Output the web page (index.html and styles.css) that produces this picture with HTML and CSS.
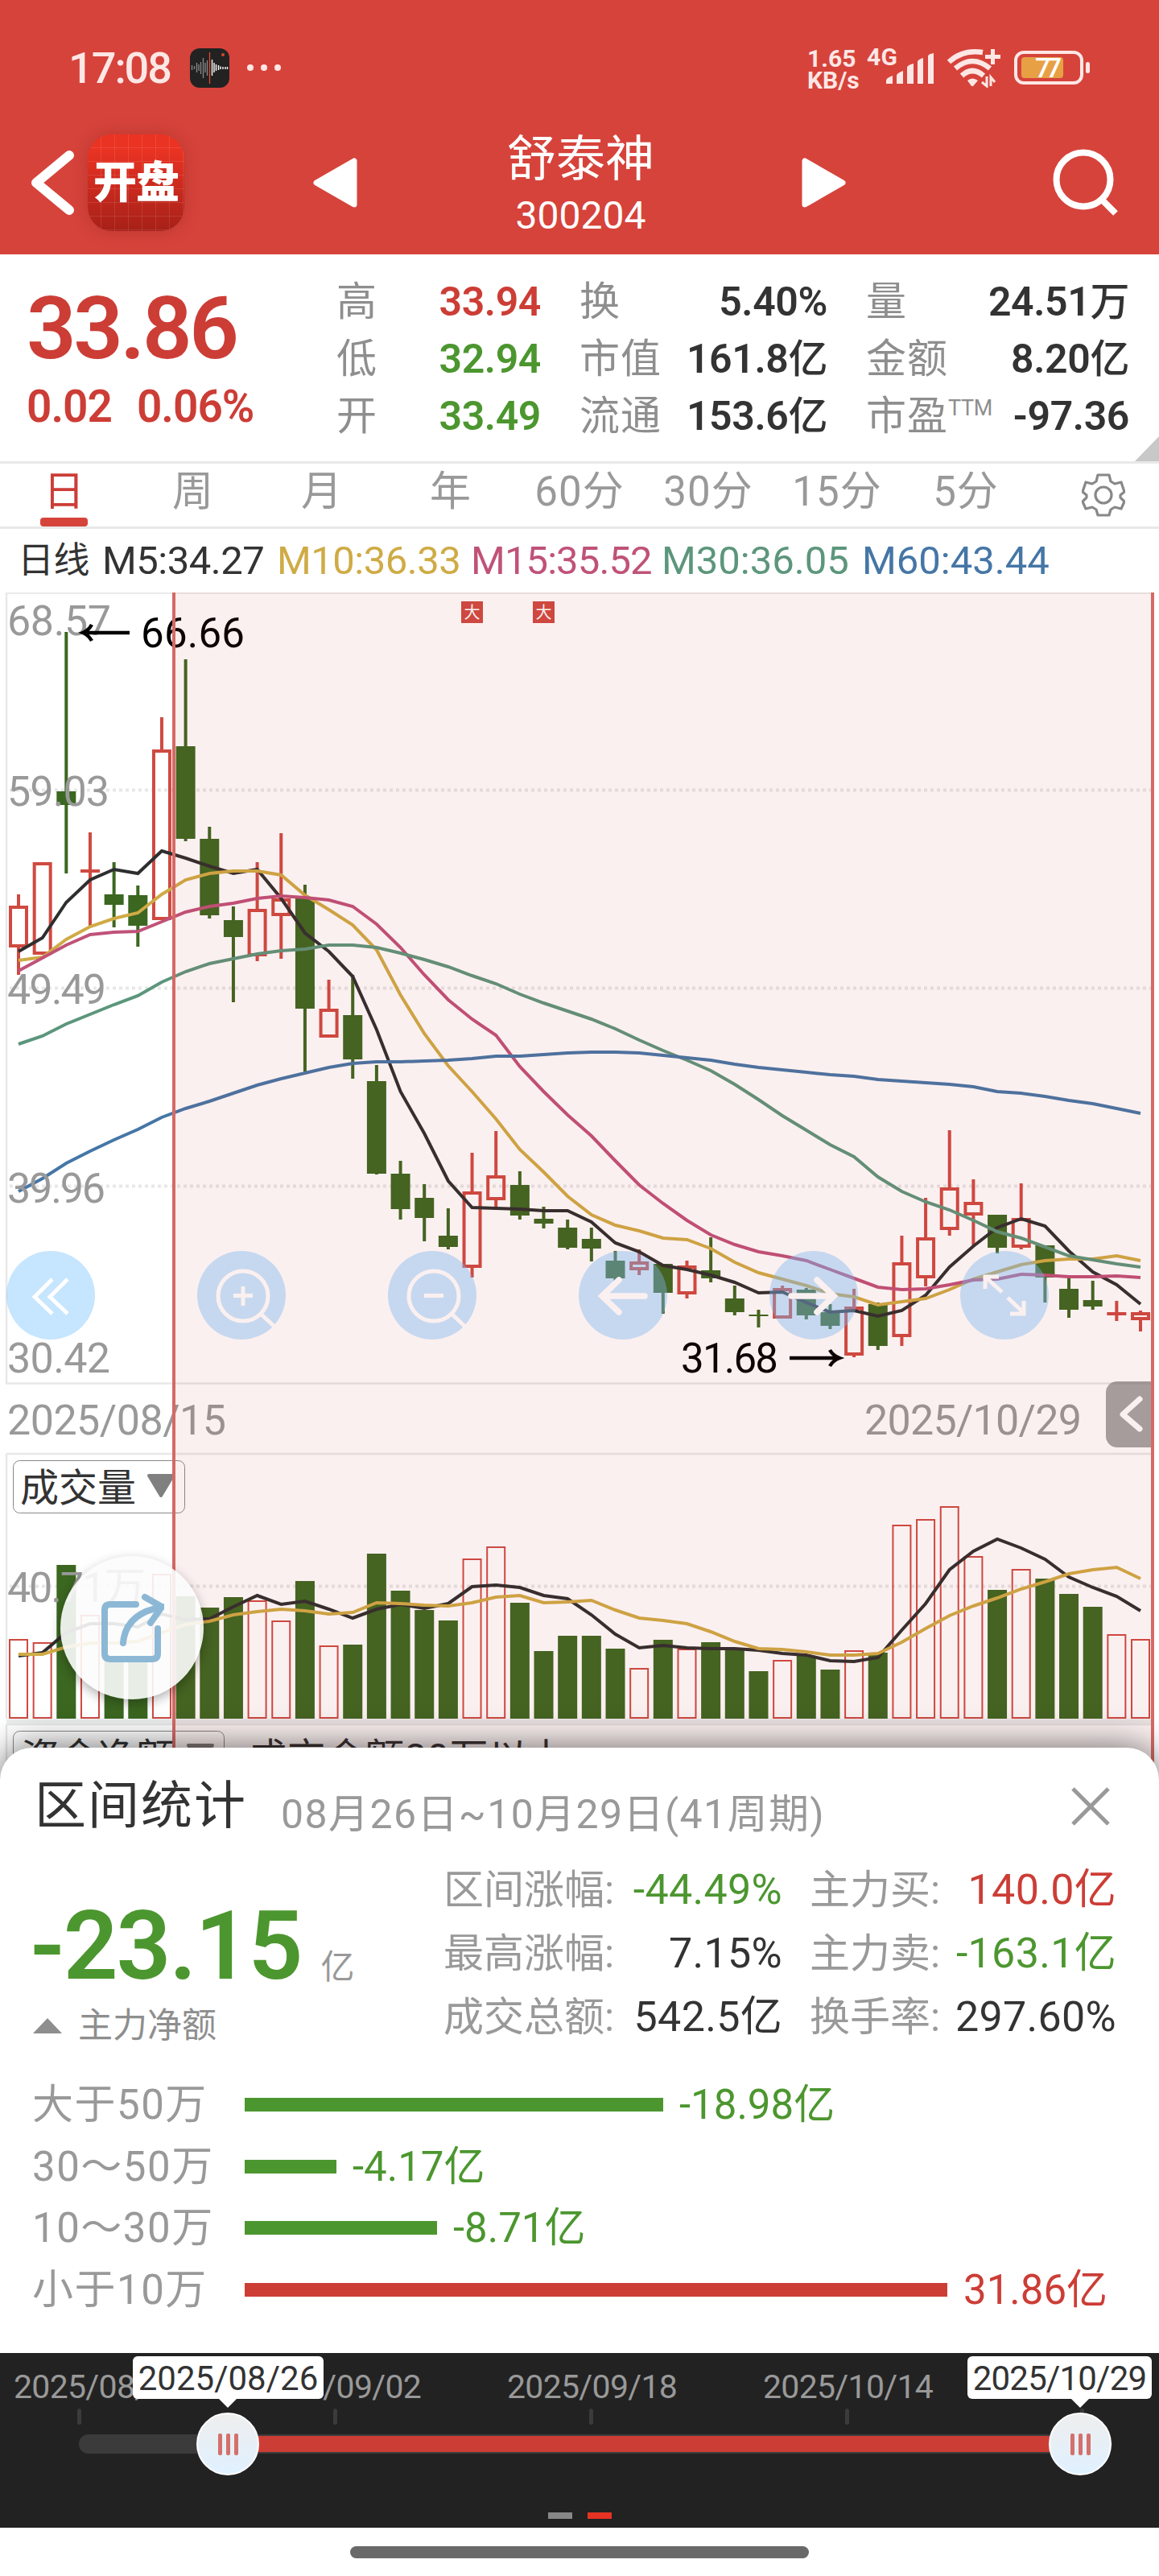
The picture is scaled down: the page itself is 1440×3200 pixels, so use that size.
FILE: index.html
```
<!DOCTYPE html>
<html lang="zh-CN">
<head>
    <meta charset="UTF-8">
    <meta name="viewport" content="width=device-width, initial-scale=1.0">
    <title>舒泰神 300204</title>
    <link rel="stylesheet" href="styles.css">
</head>
<body>
    <header class="header">
        <!-- 状态栏 -->
        <div class="status-bar">
            <span class="clock">17:08</span>
            <svg class="recorder" viewBox="0 0 49 49">
                <rect width="49" height="49" rx="12" fill="#222"/>
                <path d="M2.500 21v6M5.500 22v4M8.500 18v12M11 20v8M13.500 17v15M16.500 12v25M19 18v12M21.500 15v19" stroke="#8a8a8a" stroke-width="1.300"/>
                <path d="M27.500 14v20M30 18v12M32.500 20v8M35.500 21v6M38 22.500v3.500M41 23v3M44 23v3M46.500 23v3" stroke="#fff" stroke-width="1.400"/>
                <path d="M24.500 5v39" stroke="#e04b30" stroke-width="1.300"/>
                <circle cx="41" cy="8" r="2" fill="#d4492f"/>
            </svg>
            <span class="dots"><i></i><i></i><i></i></span>
            <div class="net-speed"><span>1.65</span><span>KB/s</span></div>
            <svg class="signal" viewBox="0 0 85 50">
                <text x="0" y="22" class="signal-text" textLength="38">4G</text>
                <path d="M24 45v-4q0-3 8-6v10zM37 45v-10q0-3 8-6v16zM50 45V25q0-3 8-5v25zM63 45V18q0-3 7-5v32zM76 45V11q0-3 7-4v38z" fill="#fde7e5"/>
            </svg>
            <svg class="wifi" viewBox="0 0 70 50">
                <g fill="none" stroke="#fde7e5" stroke-width="6.500">
                    <path d="M3 18Q20 2 45 6"/>
                    <path d="M11 26Q32 8 54 26"/>
                    <path d="M19 35Q32 23 46 35"/>
                </g>
                <path d="M26 41q6-5 13 0l-6 7h-2zM55 2h5v7h7v5h-7v7h-5v-7h-7V9h7z" fill="#fde7e5"/>
                <path d="M50 36v12l-6-5M55 48V37l5 6" fill="none" stroke="#fde7e5" stroke-width="3"/>
            </svg>
            <svg class="battery" viewBox="0 0 96 42">
                <rect x="2" y="2" width="82" height="38" rx="10" fill="none" stroke="#fde7e5" stroke-width="4"/>
                <rect x="9" y="8" width="52" height="26" rx="4" fill="#e8a045"/>
                <rect x="89" y="14" width="5" height="14" rx="2.500" fill="#fde7e5"/>
                <text x="26" y="33" class="battery-text" textLength="33">77</text>
            </svg>
        </div>

        <!-- 标题栏 -->
        <div class="title-bar">
            <svg class="back" viewBox="0 0 54 80"><path d="M47 6 6 40l41 34" fill="none" stroke="#fff" stroke-width="12" stroke-linecap="round" stroke-linejoin="round"/></svg>
            <div class="app-logo">开盘</div>
            <svg class="prev" viewBox="0 0 56 62"><path d="M51 4v54L4 31z" fill="#fff" stroke="#fff" stroke-width="7" stroke-linejoin="round"/></svg>
            <div class="stock">
                <h1>舒泰神</h1>
                <p>300204</p>
            </div>
            <svg class="next" viewBox="0 0 56 62"><path d="M5 4v54l47-27z" fill="#fff" stroke="#fff" stroke-width="7" stroke-linejoin="round"/></svg>
            <svg class="search" viewBox="0 0 84 84"><circle cx="38" cy="38" r="33.500" fill="none" stroke="#fff" stroke-width="8"/><path d="m61 63 17 17" stroke="#fff" stroke-width="8"/></svg>
        </div>
    </header>

    <!-- 行情 -->
    <section class="quote">
        <div class="price red">
            <strong>33.86</strong>
            <div class="change"><span>0.02</span><span>0.06%</span></div>
        </div>
        <dl class="quote-grid">
            <dt>高</dt><dd class="red">33.94</dd><dt>换</dt><dd>5.40%</dd><dt>量</dt><dd>24.51<small>万</small></dd>
            <dt>低</dt><dd class="green">32.94</dd><dt>市值</dt><dd>161.8<small>亿</small></dd><dt>金额</dt><dd>8.20<small>亿</small></dd>
            <dt>开</dt><dd class="green">33.49</dd><dt>流通</dt><dd>153.6<small>亿</small></dd><dt>市盈<sup>TTM</sup></dt><dd>-97.36</dd>
        </dl>
    </section>

    <nav class="tabs">
        <a class="active">日</a><a>周</a><a>月</a><a>年</a><a>60分</a><a>30分</a><a>15分</a><a>5分</a>
        <svg class="gear" viewBox="0 0 54 54">
            <path d="M20 2h14l2 8 5 3 8-2 4 12-5 4 0 3 5 5-4 9-8-2-5 3-2 7H20l-2-7-5-3-8 2-4-9 5-5 0-3-5-4 4-12 8 2 5-3z" fill="none" stroke="#888" stroke-width="3.200" stroke-linejoin="round"/>
            <circle cx="27" cy="27" r="10" fill="none" stroke="#888" stroke-width="3.200"/>
        </svg>
    </nav>

    <div class="averages">
        <span>日线</span>
        <span>M5:34.27</span>
        <span class="m10">M10:36.33</span>
        <span class="m15">M15:35.52</span>
        <span class="m30">M30:36.05</span>
        <span class="m60">M60:43.44</span>
    </div>

    <!-- K线和成交量 -->
    <section class="chart">
        <svg class="plot" id="plot" viewBox="0 736 1440 1475">
            <g class="frame">
                <path d="M8 736.500H1432M8 736V1718.500H1432M8 1806H1432M8 1806V2135M8 2142H1432M8 2142V2211"/>
                <path d="M8 2138.500H1432" class="divider"/>
            </g>
            <path class="grid" d="M12 981.500H1430M12 1227.500H1430M12 1473.500H1430M12 1970.500H1430"/>
            <g id="candles"></g>
            <g id="volumes"></g>
            <g id="lines"></g>
            <g class="axis">
                <text x="9" y="789" textLength="129">68.57</text>
                <text x="9" y="1001" textLength="127">59.03</text>
                <text x="9" y="1247" textLength="123">49.49</text>
                <text x="9" y="1494" textLength="122">39.96</text>
                <text x="9" y="1705" textLength="128">30.42</text>
                <text x="9" y="1782" textLength="272">2025/08/15</text>
                <text x="1074" y="1782" textLength="270">2025/10/29</text>
                <text x="9" y="1990" textLength="172">40.71万</text>
            </g>
            <g class="extreme">
                <path d="M161 786h-58M114 776q-4 7-11 10 7 3 11 10"/>
                <text x="175" y="804" textLength="129">66.66</text>
                <text x="846" y="1705" textLength="121">31.68</text>
                <path d="M981 1687h62M1031 1677q4 7 12 10-8 3-12 10"/>
            </g>
            <g class="mark">
                <rect x="573" y="747" width="27" height="27"/><text x="576.500" y="768">大</text>
                <rect x="662" y="747" width="27" height="27"/><text x="665.500" y="768">大</text>
            </g>
            <g class="picker">
                <rect x="16.500" y="1814.500" width="213" height="65" rx="8"/>
                <text x="25" y="1865" textLength="144">成交量</text>
                <path d="M185 1833h30l-15 25z"/>
                <rect x="16.500" y="2150.500" width="262" height="65" rx="8"/>
                <text x="26" y="2200" textLength="192">资金净额</text>
                <path d="M234 2168h30l-15 25z"/>
                <text x="308" y="2200" textLength="396">成交金额30万以上</text>
            </g>
        </svg>

        <div class="toolbar">
            <button><svg viewBox="0 0 110 110"><path d="m57 35-22 22 22 21M76 35 54 57l22 21"/></svg></button>
            <button><svg viewBox="0 0 110 110"><circle cx="57" cy="56" r="31"/><path d="m80 79 16 15M45 55.500h24M57 44v24"/></svg></button>
            <button><svg viewBox="0 0 110 110"><circle cx="57" cy="56" r="31"/><path d="m80 79 16 15M45 55.500h24"/></svg></button>
            <button><svg viewBox="0 0 110 110" class="bold"><path d="M82 56H30M50 36 29 56l21 20"/></svg></button>
            <button><svg viewBox="0 0 110 110" class="bold"><path d="M27 56h52M59 36l21 20-21 20"/></svg></button>
            <button><svg viewBox="0 0 110 110"><path d="M31 47V32h17M32 33l20 18M59 58l20 19M79 62v16H62"/></svg></button>
        </div>

        <div class="drawer"><svg viewBox="0 0 58 82"><path d="M42 22 21 41l21 18" fill="none" stroke="#fff" stroke-width="7" stroke-linecap="round" stroke-linejoin="round"/></svg></div>
        <div class="selection"></div>
        <div class="share">
            <svg viewBox="0 0 80 86"><path d="M45 14H13q-7 0-7 7v54q0 7 7 7h52q7 0 7-7V44M29 62Q32 25 78 17M56 5l21 12-14 20" fill="none" stroke="#8cb8d6" stroke-width="8" stroke-linecap="round" stroke-linejoin="round"/></svg>
        </div>
    </section>

    <!-- 区间统计 -->
    <section class="sheet">
        <div class="sheet-head">
            <h2>区间统计</h2>
            <span class="range">08月26日~10月29日(41周期)</span>
            <svg class="close" viewBox="0 0 48 48"><path d="m2 2 44 44M46 2 2 46" stroke="#999" stroke-width="5"/></svg>
        </div>

        <div class="summary">
            <div class="net">
                <div class="net-value"><strong>-23.15</strong><span>亿</span></div>
                <div class="net-label">主力净额</div>
            </div>
            <dl class="stats">
                <dt>区间涨幅:</dt><dd class="green">-44.49%</dd><dt>主力买:</dt><dd class="red">140.0亿</dd>
                <dt>最高涨幅:</dt><dd>7.15%</dd><dt>主力卖:</dt><dd class="green">-163.1亿</dd>
                <dt>成交总额:</dt><dd>542.5亿</dd><dt>换手率:</dt><dd>297.60%</dd>
            </dl>
        </div>

        <div class="flows">
            <div class="flow green"><label>大于50万</label><i style="width: 520px"></i><span>-18.98亿</span></div>
            <div class="flow green"><label>30～50万</label><i style="width: 114px"></i><span>-4.17亿</span></div>
            <div class="flow green"><label>10～30万</label><i style="width: 239px"></i><span>-8.71亿</span></div>
            <div class="flow red"><label>小于10万</label><i style="width: 873px"></i><span>31.86亿</span></div>
        </div>
    </section>

    <!-- 时间轴 -->
    <section class="timeline">
        <div class="dates">
            <span>2025/08/15</span><span>2025/09/02</span><span>2025/09/18</span><span>2025/10/14</span>
        </div>
        <div class="ticks"><i></i><i></i><i></i><i></i><i></i></div>
        <div class="track"><div class="track-fill"></div></div>
        <div class="thumb thumb-start"><i></i><i></i><i></i></div>
        <div class="thumb thumb-end"><i></i><i></i><i></i></div>
        <div class="tip tip-start">2025/08/26</div>
        <div class="tip tip-end">2025/10/29</div>
        <div class="pager"><i></i><i class="on"></i></div>
    </section>

    <footer class="home"><div class="home-bar"></div></footer>

    <script>
        const STEP = 29.66, START = 23;
        const px = i => START + STEP * i;

        // [涨1跌0, 最高, 实体上沿, 实体下沿, 最低]
        const candles = [
            [1,1111,1125,1177,1211],[1,1071,1071,1186,1186],[0,785,983,1000,1085],[1,1034,1080,1084,1151],
            [0,1071,1111,1124,1152],[0,1100,1112,1150,1176],[1,891,931,1143,1143],[0,819,927,1042,1045],
            [0,1027,1042,1137,1141],[0,1126,1143,1164,1245],[1,1071,1129,1188,1194],[1,1035,1116,1138,1191],
            [0,1099,1116,1253,1331],[1,1217,1253,1289,1289],[0,1211,1261,1316,1340],[0,1323,1343,1458,1459],
            [0,1442,1458,1502,1515],[0,1471,1488,1513,1542],[0,1501,1535,1549,1552],[1,1432,1480,1575,1587],
            [1,1405,1460,1491,1503],[0,1455,1472,1510,1515],[0,1499,1514,1520,1526],[0,1515,1525,1550,1552],
            [0,1525,1539,1551,1567],[0,1554,1566,1588,1591],[1,1552,1567,1578,1584],[0,1570,1570,1606,1632],
            [1,1566,1572,1608,1613],[0,1537,1578,1588,1593],[0,1597,1613,1630,1634],[0,1627,1633,1635,1649],
            [1,1597,1600,1638,1638],[0,1600,1602,1634,1639],[0,1620,1630,1647,1651],[1,1601,1623,1684,1686],
            [0,1618,1620,1672,1677],[1,1535,1568,1661,1672],[1,1488,1537,1588,1598],[1,1404,1475,1528,1535],
            [1,1465,1493,1510,1547],[0,1509,1509,1550,1557],[1,1470,1513,1550,1552],[0,1547,1547,1587,1618],
            [0,1584,1601,1627,1637],[0,1591,1615,1623,1627],[1,1616,1630,1634,1641],[1,1628,1630,1640,1654]
        ];

        const volumes = [
            2036,2040,1944,2006,2059,2058,1955,1983,1997,1984,1988,2013,1964,2044,2043,1930,1976,2000,2013,1936,1921,1991,2051,2032,
            2032,2048,2072,2037,2048,2040,2049,2076,2062,2057,2074,2050,2053,1894,1887,1871,1933,1975,1949,1961,1980,1996,2030,2036
        ];

        const lines = {
            m5: [1182,1165,1121,1093,1080,1085,1057,1066,1076,1085,1080,1116,1159,1182,1213,1279,1356,1408,1467,1500,1501,1502,1504,1504,
                1518,1544,1555,1572,1577,1584,1593,1606,1605,1618,1630,1628,1635,1628,1609,1574,1548,1525,1514,1523,1554,1580,1596,1620],
            m10: [1193,1189,1167,1151,1141,1134,1111,1093,1085,1082,1082,1087,1112,1130,1149,1180,1236,1284,1324,1356,1390,1428,1456,1486,
                1509,1522,1529,1538,1540,1551,1568,1581,1589,1597,1607,1611,1621,1617,1613,1602,1589,1580,1571,1566,1564,1564,1560,1566],
            m15: [1206,1190,1174,1161,1158,1157,1145,1133,1126,1122,1116,1113,1115,1118,1126,1148,1177,1211,1242,1266,1286,1325,1356,1385,
                1411,1442,1472,1495,1516,1534,1546,1555,1560,1566,1577,1588,1599,1602,1601,1596,1590,1589,1583,1584,1586,1586,1585,1587],
            m30: [1297,1287,1272,1260,1248,1237,1220,1207,1197,1191,1185,1181,1179,1174,1174,1177,1184,1192,1201,1212,1222,1235,1246,1256,
                1266,1278,1292,1305,1317,1330,1347,1366,1386,1404,1422,1437,1462,1480,1493,1503,1516,1530,1538,1549,1560,1565,1570,1574],
            m60: [1480,1464,1445,1430,1416,1403,1388,1377,1368,1358,1348,1340,1333,1326,1321,1319,1319,1318,1317,1315,1312,1312,1310,1308,
                1307,1307,1308,1311,1314,1317,1322,1326,1329,1332,1335,1337,1341,1343,1345,1347,1350,1356,1358,1362,1367,1371,1377,1383],
            'v5 m5': [2057,2053,2028,2017,2017,2021,2005,2012,2011,1996,1982,1993,1989,1999,2010,1999,1993,1998,1992,1971,1969,1972,1982,1986,
                2006,2030,2047,2044,2047,2048,2048,2050,2054,2056,2063,2064,2059,2025,1992,1950,1927,1912,1923,1937,1959,1972,1983,2001],
            'v10 m10': [2055,2055,2046,2041,2041,2039,2028,2018,2014,2006,2002,1999,2001,2005,2003,1991,1992,1994,1995,1991,1984,1982,1991,1990,
                1988,2000,2010,2013,2017,2027,2039,2048,2049,2052,2056,2056,2054,2040,2023,2007,1995,1985,1974,1965,1955,1950,1947,1961]
        };

        let bodies = '', bars = '', paths = '';
        candles.forEach(([up, high, top, bottom, low], i) => {
            const x = px(i), h = bottom - top;
            const cls = up ? 'up' : 'down';
            bodies += `<path class="${cls} wick" d="M${x} ${high}V${top}M${x} ${bottom}V${low}"/>`;
            if (up && h > 4) {
                bodies += `<rect class="up" x="${x - 10}" y="${top + 2}" width="20" height="${h - 4}"/>`;
            } else {
                bodies += `<rect class="${cls} solid" x="${x - 12}" y="${top}" width="24" height="${h}"/>`;
            }
            const v = volumes[i];
            bars += up
                ? `<rect class="up thin" x="${x - 11}" y="${v + 1}" width="22" height="${2134 - v - 1}"/>`
                : `<rect class="down solid" x="${x - 12}" y="${v}" width="24" height="${2135 - v}"/>`;
        });
        for (const name in lines) {
            const points = lines[name].map((y, i) => `${px(i).toFixed(1)},${y}`).join(' ');
            paths += `<polyline class="${name}" points="${points}"/>`;
        }
        document.getElementById('candles').innerHTML = bodies;
        document.getElementById('volumes').innerHTML = bars;
        document.getElementById('lines').innerHTML = paths;
    </script>
</body>
</html>
```
FILE: styles.css
```
:root {
    --red: #cc3d36;
    --green: #4c962f;
    --brand: #d6433b;
    --text: #333;
    --muted: #999;
}

* {
    box-sizing: border-box;
    margin: 0;
    padding: 0;
}

body {
    width: 1440px;
    height: 3200px;
    overflow: hidden;
    background: #fff;
    color: var(--text);
    font-family: Roboto, "Noto Sans CJK SC", sans-serif;
    font-size: 50px;
    line-height: 1;
}

svg {
    display: block;
    flex: none;
}

.red { color: var(--red); }
.green { color: var(--green); }
.m10 { color: #cfab45; }
.m15 { color: #c05279; }
.m30 { color: #5c967c; }
.m60 { color: #4576a6; }

/* header */
.header {
    height: 316px;
    background: var(--brand);
    color: #fff;
}

.status-bar {
    display: flex;
    align-items: center;
    height: 168px;
    padding-left: 85px;
}

.clock {
    width: 151px;
    padding-top: 2px;
    font-size: 54px;
    font-weight: 500;
    letter-spacing: -2px;
    color: #fde7e5;
}

.recorder {
    width: 49px;
    height: 49px;
}

.dots {
    display: flex;
    gap: 9px;
    width: 698px;
    padding-left: 22px;
}

.dots i {
    width: 8px;
    height: 8px;
    border-radius: 50%;
    background: #fde7e5;
}

.net-speed {
    display: flex;
    flex-direction: column;
    width: 94px;
    padding: 3px 0 0 20px;
    font-size: 30px;
    font-weight: 700;
    line-height: 27px;
    color: #fde7e5;
}

.signal {
    width: 85px;
    height: 50px;
    overflow: visible;
}

.signal-text {
    font-size: 30px;
    font-weight: 700;
    fill: #fde7e5;
}

.wifi {
    width: 70px;
    height: 50px;
    margin-left: 14px;
}

.battery {
    width: 96px;
    height: 42px;
    margin-left: 14px;
}

.battery-text {
    font-size: 34px;
    font-weight: 500;
    fill: #fff;
}

.title-bar {
    display: flex;
    align-items: center;
    height: 118px;
    padding-left: 39px;
}

.back {
    width: 54px;
    height: 80px;
}

.app-logo {
    flex: none;
    width: 120px;
    height: 120px;
    margin-left: 16px;
    border-radius: 30px;
    background:
        repeating-linear-gradient(90deg, transparent 0 16px, rgba(255,255,255,0.1) 16px 17px),
        repeating-linear-gradient(transparent 0 16px, rgba(255,255,255,0.1) 16px 17px),
        linear-gradient(#ea3323 15%, #a62018);
    box-shadow: 0 0 20px rgba(120,30,20,0.3);
    font-size: 54px;
    font-weight: 900;
    letter-spacing: -1px;
    line-height: 122px;
    text-align: center;
}

.prev {
    width: 56px;
    height: 62px;
    margin-left: 160px;
}

.stock {
    width: 550px;
    padding-left: 3px;
    text-align: center;
}

.stock h1 {
    height: 66px;
    font-size: 61px;
    font-weight: 400;
    line-height: 62px;
}

.stock p {
    margin-top: 15px;
    font-size: 48px;
    line-height: 40px;
}

.next {
    width: 56px;
    height: 62px;
}

.search {
    width: 84px;
    height: 84px;
    margin-left: 257px;
}

/* quote */
.quote {
    position: relative;
    display: flex;
    height: 260px;
    border-bottom: 3px solid #e9e9e9;
}

.quote::after {
    content: "";
    position: absolute;
    right: 0;
    bottom: 0;
    border: solid transparent;
    border-width: 0 0 31px 30px;
    border-bottom-color: #c8c8c8;
}

.price {
    width: 418px;
    padding: 38px 0 0 33px;
    font-weight: 600;
}

.price strong {
    display: block;
    font-size: 108px;
    font-weight: 600;
    letter-spacing: -3.4px;
    line-height: 108px;
}

.change {
    display: flex;
    gap: 31px;
    padding-top: 16px;
    font-size: 55px;
    letter-spacing: -1px;
    line-height: 54px;
}

.quote-grid {
    display: grid;
    grid-template-columns: 119px 135px 198px 158px 198px 177px;
    grid-auto-rows: 71px;
    align-items: center;
    padding-top: 23px;
}

.quote-grid dt {
    color: #8e8e8e;
    letter-spacing: 1px;
    white-space: nowrap;
}

.quote-grid dt:nth-of-type(3n+2),
.quote-grid dt:nth-of-type(3n) {
    padding-left: 48px;
}

.quote-grid dd {
    justify-self: end;
    font-weight: 600;
    letter-spacing: -0.4px;
    white-space: nowrap;
}

.quote-grid small {
    font-size: 49px;
    font-weight: 500;
}

.quote-grid sup {
    font-size: 27px;
    letter-spacing: -0.4px;
    vertical-align: 18px;
    line-height: 0;
}

/* tabs */
.tabs {
    display: flex;
    align-items: center;
    height: 81px;
    border-bottom: 3px solid #e9e9e9;
    color: var(--muted);
}

.tabs a {
    position: relative;
    width: 160px;
    padding-bottom: 8px;
    text-align: center;
    font-size: 51px;
    line-height: 70px;
    letter-spacing: 1px;
}

.tabs .active {
    color: var(--red);
}

.tabs .active::after {
    content: "";
    position: absolute;
    left: 50px;
    bottom: 0;
    width: 59px;
    height: 11px;
    border-radius: 4px;
    background: var(--brand);
}

.gear {
    width: 54px;
    height: 54px;
    margin-left: 64px;
}

.averages {
    display: grid;
    grid-template-columns: 105px 217px 241px 237px 249px 1fr;
    align-items: center;
    height: 79px;
    padding-left: 22px;
    font-size: 49px;
    letter-spacing: -0.5px;
    white-space: nowrap;
}

.averages .m15 {
    letter-spacing: -0.9px;
}

.averages .m30,
.averages .m60 {
    letter-spacing: 0;
}

.averages span:first-child {
    font-size: 45px;
}

/* chart */
.chart {
    position: relative;
    height: 1475px;
}

.plot {
    width: 1440px;
    height: 1475px;
}

.frame path {
    fill: none;
    stroke: #e8e8e8;
    stroke-width: 2.5;
}

.frame .divider {
    stroke: #eceeee;
    stroke-width: 6;
}

.grid {
    stroke: #e8e8e8;
    stroke-width: 4;
    stroke-dasharray: 4 4;
}

.up {
    fill: none;
    stroke: #cf4a41;
    stroke-width: 4;
}

.up.thin { stroke-width: 2; }
.up.solid { fill: #cf4a41; stroke: none; }

.down {
    fill: #3b6720;
    stroke: #3b6720;
    stroke-width: 4;
}

.down.solid { stroke: none; }

polyline {
    fill: none;
    stroke: #2e2e2e;
    stroke-width: 4;
}

polyline.m10 { stroke: #cfab45; }
polyline.m15 { stroke: #c05279; }
polyline.m30 { stroke: #5c967c; }
polyline.m60 { stroke: #4576a6; }

.axis text {
    font-size: 52px;
    fill: var(--muted);
}

.extreme text {
    font-size: 51px;
    fill: #000;
}

.extreme path {
    fill: none;
    stroke: #000;
    stroke-width: 4.5;
}

.mark rect { fill: #cf4a41; }
.mark text { font-size: 20px; fill: #fff; }

.picker rect { fill: none; stroke: #888; }
.picker text { font-size: 48px; fill: var(--text); }
.picker path { fill: #808080; stroke: #808080; stroke-width: 4; stroke-linejoin: round; }

.selection {
    position: absolute;
    left: 214px;
    top: 0;
    width: 1220px;
    height: 100%;
    border: solid #d56a66;
    border-width: 0 4px;
    background: rgba(206,60,50,0.075);
}

.toolbar {
    position: absolute;
    left: 8px;
    top: 818px;
    display: flex;
    gap: 127px;
}

.toolbar button {
    width: 110px;
    height: 110px;
    border: 0;
    border-radius: 50%;
    background: rgba(118,193,253,0.42);
}

.toolbar svg {
    fill: none;
    stroke: #fff;
    stroke-width: 5;
}

.toolbar .bold {
    stroke-width: 7.5;
    stroke-linecap: round;
}

.drawer {
    position: absolute;
    left: 1374px;
    top: 980px;
    width: 58px;
    height: 82px;
    border-radius: 14px 0 0 14px;
    background: rgba(110,110,110,0.62);
}

.share {
    position: absolute;
    left: 75px;
    top: 1197px;
    display: flex;
    align-items: center;
    justify-content: center;
    width: 178px;
    height: 178px;
    border-radius: 50%;
    background: rgba(252,252,252,0.9);
    box-shadow: 0 5px 14px rgba(0,0,0,0.3);
}

.share svg {
    width: 80px;
    height: 86px;
}

/* sheet */
.sheet {
    position: relative;
    height: 752px;
    margin-top: -40px;
    padding: 0 43px;
    border-radius: 40px 40px 0 0;
    background: #fff;
    box-shadow: 0 0 46px rgba(0,0,0,0.6);
}

.sheet-head {
    display: flex;
    align-items: center;
    height: 146px;
}

.sheet-head h2 {
    width: 306px;
    font-size: 64px;
    font-weight: 400;
    letter-spacing: 2px;
}

.range {
    width: 982px;
    padding-top: 20px;
    font-size: 50px;
    letter-spacing: 1.4px;
    color: var(--muted);
}

.close {
    width: 48px;
    height: 48px;
}

.summary {
    display: flex;
    height: 258px;
}

.net {
    width: 508px;
}

.net-value {
    display: flex;
    align-items: baseline;
    gap: 24px;
    margin: 42px 0 0 -6px;
    line-height: 118px;
}

.net-value strong {
    font-size: 119px;
    font-weight: 600;
    letter-spacing: -2px;
    color: var(--green);
}

.net-value span {
    font-size: 42px;
    color: var(--muted);
}

.net-label {
    display: flex;
    align-items: center;
    gap: 20px;
    height: 43px;
    margin: -8px 0 0 -2px;
    font-size: 43px;
    color: #8e8e8e;
}

.net-label::before {
    content: "";
    border: solid transparent;
    border-width: 0 18px 19px;
    border-bottom-color: #8e8e8e;
}

.stats {
    display: grid;
    grid-template-columns: 214px 207px 198px 217px;
    grid-auto-rows: 79px;
    align-items: center;
    margin-top: -9px;
    white-space: nowrap;
}

.stats dt {
    color: var(--muted);
}

.stats dt:nth-of-type(even) {
    padding-left: 34px;
}

.stats dd {
    justify-self: end;
    font-size: 52px;
    letter-spacing: 0.3px;
}

.flows {
    padding-top: 1px;
}

.flow {
    display: flex;
    align-items: center;
    height: 76.7px;
    font-size: 51px;
    white-space: nowrap;
}

.flow label {
    width: 264px;
    margin-left: -3px;
    letter-spacing: 1.5px;
    color: var(--muted);
}

.flow i {
    height: 17px;
    margin-right: 20px;
    background: currentColor;
}

/* timeline */
.timeline {
    position: relative;
    height: 217px;
    background: #222;
}

.dates {
    display: flex;
    gap: 104px;
    padding: 21px 0 0 17px;
    font-size: 41px;
    line-height: 42px;
    letter-spacing: -0.7px;
    color: var(--muted);
}

.dates span {
    width: 214px;
}

.dates span:first-child {
    width: 191px;
}

.ticks {
    display: flex;
    gap: 313px;
    margin: 6px 0 0 96px;
}

.ticks i {
    flex: none;
    width: 5px;
    height: 20px;
    border-radius: 3px;
    background: #3b3b3b;
}

.ticks i:last-child {
    margin-left: -26px;
}

.track {
    width: 1284px;
    margin: 12px 0 0 98px;
    padding: 2px 0 2px 185px;
    border-radius: 12px;
    background: #3b3b3b;
}

.track-fill {
    width: 1059px;
    height: 20px;
    background: #cc3d36;
}

.thumb {
    position: absolute;
    top: 74px;
    display: flex;
    align-items: center;
    justify-content: center;
    gap: 5px;
    width: 78px;
    height: 78px;
    border: 2px solid #fff;
    border-radius: 50%;
    background: linear-gradient(#eee, #e0f1ff);
}

.thumb-start { left: 244px; }
.thumb-end { left: 1303px; }

.thumb i {
    width: 5px;
    height: 27px;
    border-radius: 2px;
    background: #d4706b;
}

.tip {
    position: absolute;
    top: 4px;
    height: 53px;
    border-radius: 6px;
    background: #fff;
    font-size: 42px;
    line-height: 55px;
    text-align: center;
}

.tip-start {
    left: 165px;
    width: 237px;
}

.tip-end {
    left: 1202px;
    width: 229px;
    letter-spacing: -0.8px;
}

.tip::after {
    content: "";
    position: absolute;
    left: 106px;
    top: 52px;
    border: solid transparent;
    border-width: 12px 12px 0;
    border-top-color: #fff;
}

.tip-end::after {
    left: 128px;
}

.pager {
    display: flex;
    justify-content: center;
    gap: 19px;
    padding-top: 73px;
}

.pager i {
    width: 30px;
    height: 8px;
    background: #888;
}

.pager .on {
    background: #e63323;
}

.home {
    padding-top: 23px;
}

.home-bar {
    width: 570px;
    height: 15px;
    margin: 0 auto;
    border-radius: 8px;
    background: #696969;
}
```
